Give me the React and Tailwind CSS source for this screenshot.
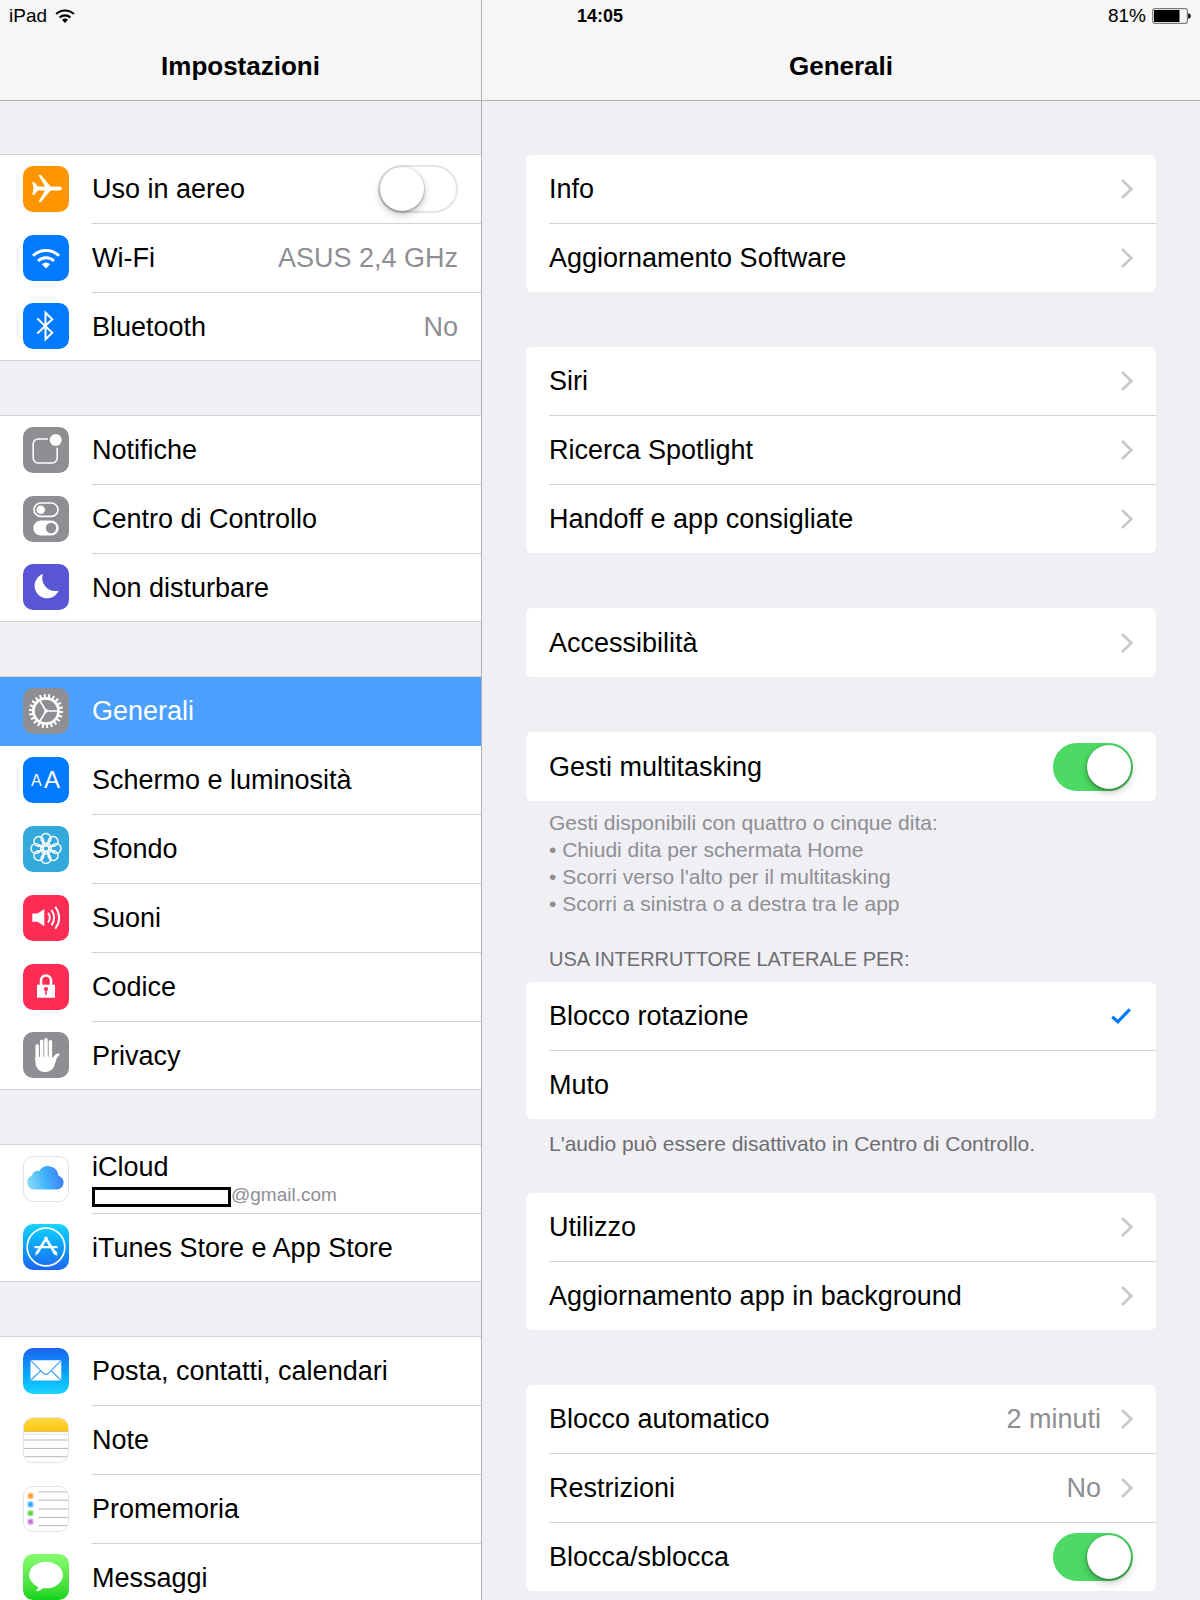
// App.jsx
// Tablet settings screen: the list of sections on the left, the "Generali" page on the right.

import React, { useState } from 'react';

// Rounded square behind every sidebar icon
const Tile = ({ className, children }) => (
  <span className={`block w-[46px] h-[46px] mb-0.5 shrink-0 rounded-[10px] overflow-hidden ${className}`}>
    <svg viewBox="0 0 46 46" className="block w-full h-full" fill="none" aria-hidden="true">
      {children}
    </svg>
  </span>
);

const AirplaneIcon = () => (
  <Tile className="bg-[#ff9500]">
    <path
      d="M9.3 16h1.8l3.8 4.4H22L15.4 9h2.6l9.6 11.4h8.2c4.2 0 4.2 4.2 0 4.2H27.600L18 36h-2.600L22 24.600h-7.100L11.100 29H9.300l1.200-6.500z"
      fill="#fff"
    />
  </Tile>
);

const WifiIcon = () => (
  <Tile className="bg-[#007aff]">
    <path d="M10 20.8A18.5 18.5 0 0 1 36 20.8" stroke="#fff" strokeWidth="3" />
    <path d="M15 26A11.5 11.5 0 0 1 31 26" stroke="#fff" strokeWidth="2.8" />
    <path d="M18.8 29.3Q23 25.8 27.2 29.3L23 33.5z" fill="#fff" />
  </Tile>
);

const BluetoothIcon = () => (
  <Tile className="bg-[#007aff]">
    <path d="M14.3 15.5L29.3 29.8L22.5 36.3V9.7L29.3 16.2L14.3 30.5" stroke="#fff" strokeWidth="2" />
  </Tile>
);

const NotificationsIcon = () => (
  <Tile className="bg-[#8e8e93]">
    <rect x="10.2" y="12" width="24" height="24" rx="5" stroke="#fff" strokeWidth="1.6" />
    <circle cx="32.7" cy="13" r="8" fill="#8e8e93" />
    <circle cx="32.7" cy="13" r="6" fill="#fff" />
  </Tile>
);

const ControlCenterIcon = () => (
  <Tile className="bg-[#8e8e93]">
    <rect x="11" y="7" width="24" height="13.4" rx="6.7" stroke="#fff" strokeWidth="1.6" />
    <circle cx="17.7" cy="13.7" r="4.3" fill="#fff" />
    <rect x="10.3" y="24.5" width="25.4" height="15" rx="7.5" fill="#fff" />
    <circle cx="28" cy="32" r="5.2" fill="#8e8e93" />
  </Tile>
);

const MoonIcon = () => (
  <Tile className="bg-[#5856d6]">
    <path d="M20 10A12.500 12.500 0 1 0 35.7 26.4A12.800 12.800 0 0 1 20 10z" fill="#fff" />
  </Tile>
);

const GearIcon = () => (
  <Tile className="bg-[#8e8e93]">
    <circle cx="23" cy="23" r="15.2" stroke="#fff" strokeWidth="3.8" pathLength="44" strokeDasharray="0.9 1.1" />
    <circle cx="23" cy="23" r="12.6" stroke="#fff" strokeWidth="2.8" />
    <path d="M23 23H35M23 23L16.800 12.500M23 23L16.800 33.500" stroke="#fff" strokeWidth="1.6" />
    <circle cx="23" cy="23" r="1.8" fill="#fff" />
  </Tile>
);

const DisplayIcon = () => (
  <Tile className="bg-[#007aff]">
    <g fill="#fff" fontFamily="Liberation Sans, Arial, sans-serif">
      <text x="8" y="29" fontSize="16">A</text>
      <text x="21" y="31" fontSize="24">A</text>
    </g>
  </Tile>
);

const WallpaperIcon = () => (
  <Tile className="bg-[#34aadc]">
    <g stroke="#fff" strokeWidth="1.4">
      {[0, 45, 90, 135, 180, 225, 270, 315].map((angle) => (
        <g key={angle} transform={`rotate(${angle} 23 22.500)`}>
          <circle cx="23" cy="12.4" r="4.9" />
          <path d="M23 19.5C20.5 18 20 16 20.5 14M23 19.5C25.5 18 26 16 25.5 14" />
        </g>
      ))}
      <circle cx="23" cy="22.5" r="2.8" />
    </g>
  </Tile>
);

const SoundsIcon = () => (
  <Tile className="bg-[#ff2d55]">
    <path d="M9.3 18.6h5.4L21.3 14v17.3L14.7 26.700H9.300z" fill="#fff" />
    <path
      d="M25 17.900Q28.500 22.700 25 27.500M28.500 15Q33.700 22.700 28.500 30.400M32.300 11.800Q40 22.700 32.300 33.800"
      stroke="#fff"
      strokeWidth="1.9"
    />
  </Tile>
);

const PasscodeIcon = () => (
  <Tile className="bg-[#ff2d55]">
    <path d="M18 21.5V16.500a5 5 0 0 1 10 0V21.500" stroke="#fff" strokeWidth="2.5" />
    <rect x="14" y="20.7" width="18" height="13" fill="#fff" />
    <circle cx="23" cy="25" r="2.1" fill="#ff2d55" />
    <path d="M23 25V31" stroke="#ff2d55" strokeWidth="1.5" />
  </Tile>
);

const PrivacyIcon = () => (
  <Tile className="bg-[#8e8e93]">
    <path d="M14.2 14V28M18.7 9.300V26M23 7.800V26M27.400 9.800V26" stroke="#fff" strokeWidth="3.5" strokeLinecap="round" />
    <path
      d="M12.450 25V30C12.450 36 16.500 40 21.500 40C26 40 29.500 38 31.200 34L33.500 27C34.300 25.200 35.500 24 36.700 23C37.200 21.600 34.500 20.800 32.800 22.300L29.150 26.300V24.500z"
      fill="#fff"
    />
  </Tile>
);

const CloudIcon = () => (
  <Tile className="bg-white border border-[#e4e4e6]">
    <defs>
      <linearGradient id="cloud" x1="4" y1="28" x2="42" y2="18" gradientUnits="userSpaceOnUse">
        <stop offset="0" stopColor="#86dbf8" />
        <stop offset="0.5" stopColor="#3fb1fb" />
        <stop offset="1" stopColor="#3f79f3" />
      </linearGradient>
    </defs>
    <path
      d="M11 34A7.500 7.500 0 0 1 8.300 19.500A5.800 5.800 0 0 1 16 14.700A10.800 10.800 0 0 1 36 19.500A7.400 7.400 0 0 1 34.500 34z"
      fill="url(#cloud)"
    />
  </Tile>
);

const AppStoreIcon = () => (
  <Tile className="bg-linear-to-b from-[#1ad4fd] to-[#1f64f0]">
    <circle cx="23" cy="23" r="18.8" stroke="#fff" strokeWidth="1.7" />
    <path d="M11.500 23.200H34.500" stroke="#fff" strokeWidth="2.2" />
    <path d="M24 13.300L13.700 29.500" stroke="#fff" strokeWidth="2.6" />
    <path d="M13.200 27.500L15.500 29.200L12 31.800z" fill="#fff" />
    <path d="M22 13.300L31 27.500" stroke="#fff" strokeWidth="2.6" />
    <path d="M29.500 28.500L32.500 26.500C34.300 28 34.700 29.500 34.300 31.500C32.500 31.300 30.800 30.600 29.500 28.500z" fill="#fff" />
  </Tile>
);

const MailIcon = () => (
  <Tile className="bg-linear-to-b from-[#1d62f0] to-[#1ad5fd]">
    <rect x="7.5" y="12.3" width="30.8" height="20.2" rx="0.8" fill="#fff" />
    <path
      d="M7.800 12.600L20.500 25.300Q23 27.600 25.500 25.300L38 12.600M7.800 32.200L17.800 22.600M38 32.200L28.100 22.600"
      stroke="#3ba0f6"
      strokeWidth="1.2"
    />
  </Tile>
);

const NotesIcon = () => (
  <Tile className="bg-white border border-[#e4e4e6]">
    <defs>
      <linearGradient id="note" x1="0" y1="0" x2="0" y2="1">
        <stop offset="0" stopColor="#fddb54" />
        <stop offset="1" stopColor="#fdc706" />
      </linearGradient>
    </defs>
    <rect x="-2" y="-2" width="50" height="16.2" fill="url(#note)" />
    <path d="M-1 14.200H47" stroke="#c9b37a" strokeWidth="0.7" />
    <path d="M0 17H46" stroke="#b9b9b9" strokeWidth="0.8" strokeDasharray="1.2 1" />
    <path d="M-1 23H47M-1 31.800H47M-1 40.500H47" stroke="#b4b4b6" strokeWidth="1" />
  </Tile>
);

const RemindersIcon = () => (
  <Tile className="bg-white border border-[#e4e4e6]">
    {[
      ['#ff9822', 9.3],
      ['#2ba6f7', 18.2],
      ['#5cd43c', 27.4],
      ['#c66fe0', 36.2],
    ].map(([color, y]) => (
      <g key={color} fill={color}>
        <circle cx="6.8" cy={y} r="3.5" opacity="0.55" />
        <circle cx="6.8" cy={y} r="2" />
      </g>
    ))}
    <path d="M15 5H47M15 13.800H47M15 23H47M15 31.800H47M15 40.300H47" stroke="#b4b4b6" strokeWidth="1" />
  </Tile>
);

const MessagesIcon = () => (
  <Tile className="bg-linear-to-b from-[#87fc70] to-[#0bd318]">
    <ellipse cx="23" cy="21" rx="16.8" ry="13.3" fill="#fff" />
    <path d="M15 31C15.500 34 14.500 35.800 12.500 37.200C16 37.200 19 35.800 20.500 33z" fill="#fff" />
  </Tile>
);

const Chevron = () => (
  <svg viewBox="0 0 12 20" className="w-3 h-5 shrink-0" fill="none" aria-hidden="true">
    <path d="M1 1L10.300 10L1 19" stroke="#c7c7cc" strokeWidth="2.6" />
  </svg>
);

// iOS style switch, a real checkbox with the knob in ::before
const Switch = ({ id, checked, onChange }) => (
  <input
    id={id}
    type="checkbox"
    role="switch"
    checked={checked}
    onChange={(e) => onChange(e.target.checked)}
    className="appearance-none flex items-center w-20 h-12 shrink-0 rounded-full border-2 border-[#e5e5e5] bg-white checked:justify-end checked:border-[#4cd964] checked:bg-[#4cd964] before:block before:content-[''] before:w-11 before:h-11 before:rounded-full before:bg-white before:shadow-[0_4px_8px_rgba(0,0,0,0.2),0_1px_3px_rgba(0,0,0,0.4)]"
  />
);

// Sidebar sections, grouped the way they are listed
const sections = [
  [
    { name: 'Uso in aereo', Icon: AirplaneIcon, toggle: true },
    { name: 'Wi-Fi', Icon: WifiIcon, value: 'ASUS 2,4 GHz' },
    { name: 'Bluetooth', Icon: BluetoothIcon, value: 'No' },
  ],
  [
    { name: 'Notifiche', Icon: NotificationsIcon },
    { name: 'Centro di Controllo', Icon: ControlCenterIcon },
    { name: 'Non disturbare', Icon: MoonIcon },
  ],
  [
    { name: 'Generali', Icon: GearIcon },
    { name: 'Schermo e luminosità', Icon: DisplayIcon },
    { name: 'Sfondo', Icon: WallpaperIcon },
    { name: 'Suoni', Icon: SoundsIcon },
    { name: 'Codice', Icon: PasscodeIcon },
    { name: 'Privacy', Icon: PrivacyIcon },
  ],
  [
    { name: 'iCloud', Icon: CloudIcon, account: '@gmail.com' },
    { name: 'iTunes Store e App Store', Icon: AppStoreIcon },
  ],
  [
    { name: 'Posta, contatti, calendari', Icon: MailIcon },
    { name: 'Note', Icon: NotesIcon },
    { name: 'Promemoria', Icon: RemindersIcon },
    { name: 'Messaggi', Icon: MessagesIcon },
  ],
];

const StatusBar = () => (
  <div className="absolute inset-x-0 top-0 z-10 grid grid-cols-3 items-center h-8 px-[9px] text-[19px] leading-6">
    <div className="flex items-center gap-2">
      <span>iPad</span>
      <svg viewBox="0 0 20 14" className="w-5 h-[14px]" fill="none" aria-label="Wi-Fi">
        <path d="M1.200 5A12.800 12.800 0 0 1 18.800 5" stroke="#000" strokeWidth="2.2" />
        <path d="M4.600 8.500A8 8 0 0 1 15.400 8.500" stroke="#000" strokeWidth="2.2" />
        <path d="M7 10.800Q10 8.200 13 10.800L10 14z" fill="#000" />
      </svg>
    </div>
    <span className="text-center text-lg leading-6 font-bold">14:05</span>
    <div className="flex items-center justify-end gap-[6px]">
      <span>81%</span>
      <svg viewBox="0 0 39 16" className="w-[39px] h-4" fill="none" aria-label="Batteria">
        <rect x="0.7" y="0.7" width="34.6" height="14.6" rx="2" stroke="#7d7d7d" strokeWidth="1.2" />
        <rect x="2" y="2" width="25.5" height="12" fill="#000" />
        <path d="M36.200 5q2.600 0.800 2.600 3t-2.600 3z" fill="#000" />
      </svg>
    </div>
  </div>
);

const NavTitle = ({ children }) => (
  <header className="flex items-center justify-center h-[101px] shrink-0 pt-8 bg-[#f6f6f6] border-b border-[#b2b2b6]">
    <h1 className="text-[26px] leading-8 font-bold">{children}</h1>
  </header>
);

const SidebarRow = ({ item, selected, onSelect, airplane, setAirplane }) => {
  const { name, Icon, value, account, toggle } = item;
  const Row = toggle ? 'div' : 'button';

  return (
    <Row
      type={toggle ? undefined : 'button'}
      onClick={toggle ? undefined : () => onSelect(name)}
      className={`group flex items-center w-full h-[69px] last:h-[67px] pl-[23px] gap-[23px] text-left ${
        selected ? 'bg-[#4a9fff] text-white' : 'bg-white'
      }`}
    >
      <Icon />
      <span
        className={`flex flex-1 items-center justify-between self-stretch pr-[23px] border-b group-last:border-b-0 ${
          selected ? 'border-transparent' : 'border-[#d3d3d6]'
        }`}
      >
        {account ? (
          <span className="flex flex-col">
            <span className="leading-8">{name}</span>
            <span className="flex items-center text-[19px] leading-6 text-[#8e8e93]">
              <span className="w-[139px] h-5 mt-1 border-[3px] border-black bg-white" />
              {account}
            </span>
          </span>
        ) : toggle ? (
          <label htmlFor="airplane">{name}</label>
        ) : (
          <span>{name}</span>
        )}
        {value && <span className="text-[#8e8e93]">{value}</span>}
        {toggle && <Switch id="airplane" checked={airplane} onChange={setAirplane} />}
      </span>
    </Row>
  );
};

const Card = ({ children }) => <div className="rounded-md bg-white overflow-hidden">{children}</div>;

const rowClass = 'group block w-full h-[69px] last:h-[68px] only:h-[69px] pl-[23px] text-left';
const rowInner = 'flex items-center gap-5 h-full pr-[23px] border-b border-[#d3d3d6] group-last:border-b-0';

const LinkRow = ({ label, value }) => (
  <button type="button" className={rowClass}>
    <span className={rowInner}>
      <span className="flex-1">{label}</span>
      {value && <span className="text-[#8e8e93]">{value}</span>}
      <Chevron />
    </span>
  </button>
);

const SwitchRow = ({ id, label, checked, onChange }) => (
  <div className={rowClass}>
    <span className={rowInner}>
      <label htmlFor={id} className="flex-1">{label}</label>
      <Switch id={id} checked={checked} onChange={onChange} />
    </span>
  </div>
);

const RadioRow = ({ label, checked, onChange }) => (
  <label className={rowClass}>
    <span className={rowInner}>
      <span className="flex-1">{label}</span>
      <input type="radio" name="side-switch" checked={checked} onChange={onChange} className="peer sr-only" />
      <svg viewBox="0 0 22 16" className="invisible peer-checked:visible w-[22px] h-4" fill="none" aria-hidden="true">
        <path d="M1.300 8.800L6.800 13.800L18.800 1.300" stroke="#007aff" strokeWidth="3.2" />
      </svg>
    </span>
  </label>
);

const App = () => {
  const [selected, setSelected] = useState('Generali');
  const [airplane, setAirplane] = useState(false);
  const [gestures, setGestures] = useState(true);
  const [lockCover, setLockCover] = useState(true);
  const [sideSwitch, setSideSwitch] = useState('Blocco rotazione');

  return (
    <div className="relative flex h-screen overflow-hidden bg-[#efeff4] text-black text-[27px] leading-8 font-['Liberation_Sans',Arial,sans-serif]">
      <StatusBar />

      {/* Sidebar */}
      <aside className="flex flex-col w-[482px] shrink-0 border-r border-[#b2b2b6]">
        <NavTitle>Impostazioni</NavTitle>
        <nav className="flex flex-col flex-1 gap-[54px] pt-[53px] overflow-y-auto [scrollbar-width:none]">
          {sections.map((group) => (
            <div key={group[0].name} className="border-y border-[#d3d3d6] shrink-0">
              {group.map((item) => (
                <SidebarRow
                  key={item.name}
                  item={item}
                  selected={item.name === selected}
                  onSelect={setSelected}
                  airplane={airplane}
                  setAirplane={setAirplane}
                />
              ))}
            </div>
          ))}
        </nav>
      </aside>

      {/* Detail page */}
      <main className="flex flex-col flex-1 min-w-0">
        <NavTitle>Generali</NavTitle>
        <div className="flex-1 px-11 pt-[54px] overflow-y-auto [scrollbar-width:none]">
          <div className="flex flex-col gap-[55px]">
            <Card>
              <LinkRow label="Info" />
              <LinkRow label="Aggiornamento Software" />
            </Card>
            <Card>
              <LinkRow label="Siri" />
              <LinkRow label="Ricerca Spotlight" />
              <LinkRow label="Handoff e app consigliate" />
            </Card>
            <Card>
              <LinkRow label="Accessibilità" />
            </Card>
            <Card>
              <SwitchRow id="gestures" label="Gesti multitasking" checked={gestures} onChange={setGestures} />
            </Card>
          </div>

          <div className="mt-2 px-[23px] text-[21px] leading-[27px] text-[#8e8e93]">
            <p>Gesti disponibili con quattro o cinque dita:</p>
            <p>• Chiudi dita per schermata Home</p>
            <p>• Scorri verso l'alto per il multitasking</p>
            <p>• Scorri a sinistra o a destra tra le app</p>
          </div>

          <h2 className="mt-[29px] mb-[9px] px-[23px] text-xl leading-[27px] text-[#6d6d72]">
            USA INTERRUTTORE LATERALE PER:
          </h2>
          <Card>
            {['Blocco rotazione', 'Muto'].map((option) => (
              <RadioRow
                key={option}
                label={option}
                checked={sideSwitch === option}
                onChange={() => setSideSwitch(option)}
              />
            ))}
          </Card>
          <p className="mt-[11px] mb-9 px-[23px] text-[21px] leading-[27px] text-[#6d6d72]">
            L'audio può essere disattivato in Centro di Controllo.
          </p>

          <div className="flex flex-col gap-[55px]">
            <Card>
              <LinkRow label="Utilizzo" />
              <LinkRow label="Aggiornamento app in background" />
            </Card>
            <Card>
              <LinkRow label="Blocco automatico" value="2 minuti" />
              <LinkRow label="Restrizioni" value="No" />
              <SwitchRow id="lock-cover" label="Blocca/sblocca" checked={lockCover} onChange={setLockCover} />
            </Card>
          </div>
        </div>
      </main>
    </div>
  );
};

export default App;
